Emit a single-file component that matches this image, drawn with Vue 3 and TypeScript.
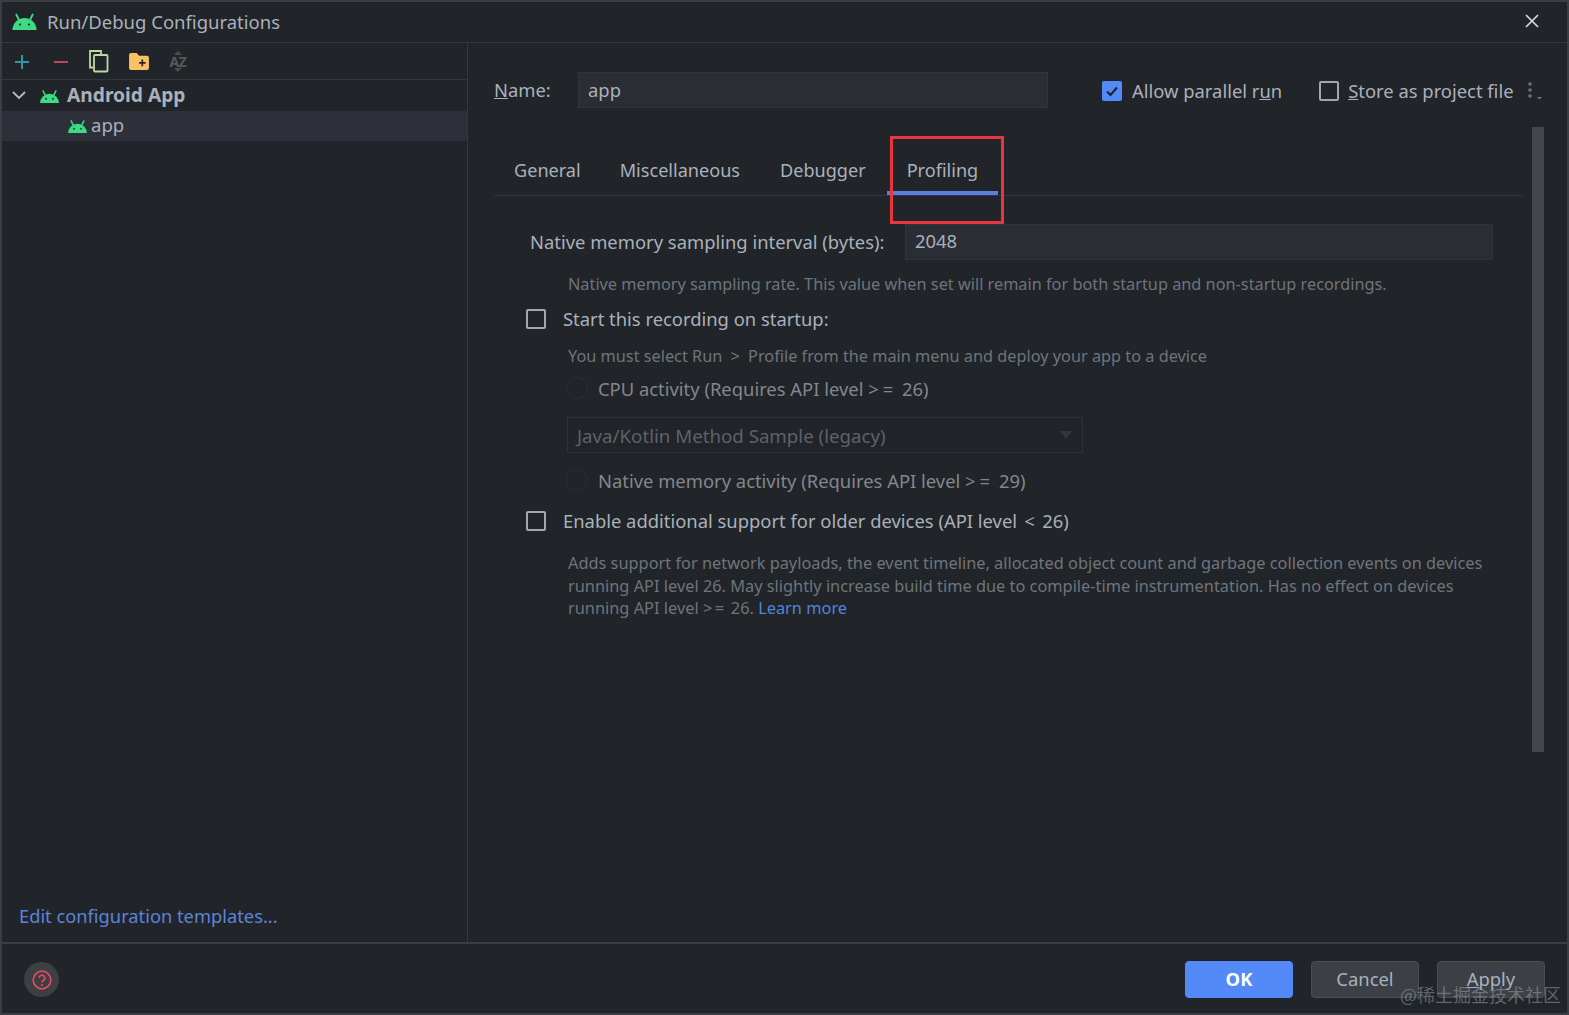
<script setup lang="ts">
const tabs: string[] = ['General', 'Miscellaneous', 'Debugger', 'Profiling']
</script>

<template>
  <div class="win">
    <header class="titlebar">
      <svg class="logo" viewBox="0 0 24 18" width="25" height="18"><path d="M0 18a12 12 0 0 1 24 0z" fill="#3ddc84"/><path d="M6.500 8 3.800 2.500M17.500 8l2.700-5.500" stroke="#3ddc84" stroke-width="1.800" stroke-linecap="round"/><circle cx="7.500" cy="12.500" r="1.100" fill="#1f2226"/><circle cx="16.500" cy="12.500" r="1.100" fill="#1f2226"/></svg>
      <span class="title">Run/Debug Configurations</span>
      <svg class="close" viewBox="0 0 14 14" width="14" height="14"><path d="M1 1l12 12M13 1 1 13" stroke="#d5d8dc" stroke-width="1.700"/></svg>
    </header>

    <div class="body">
      <aside class="side">
        <div class="toolbar">
          <svg viewBox="0 0 16 16" width="16" height="16"><path d="M8 1v14M1 8h14" stroke="#2f97a5" stroke-width="2"/></svg>
          <svg viewBox="0 0 16 16" width="16" height="16"><path d="M1 8h14" stroke="#b8485e" stroke-width="2"/></svg>
          <svg class="tight" viewBox="0 0 20 23" width="20" height="23"><path d="M4.500 17.500H1V1h11v3" fill="none" stroke="#bcd79f" stroke-width="1.800"/><rect x="5" y="5" width="13.500" height="16.500" fill="none" stroke="#bcd79f" stroke-width="1.800" rx="1"/></svg>
          <svg class="tight" viewBox="0 0 21 18" width="20" height="17"><path d="M0 2a2 2 0 0 1 2-2h6l2.500 3H19a2 2 0 0 1 2 2v11a2 2 0 0 1-2 2H2a2 2 0 0 1-2-2z" fill="#f9c364"/><path d="M10.500 10.500h7M14 7v7" stroke="#23262a" stroke-width="1.800"/></svg>
          <span class="az tight">
            <svg viewBox="0 0 8 4" width="8" height="4"><path d="M0 4h8L4 0z" fill="#4a4d52"/></svg>
            <span>AZ</span>
            <svg viewBox="0 0 8 4" width="8" height="4"><path d="M0 0h8L4 4z" fill="#4a4d52"/></svg>
          </span>
        </div>
        <div class="tree-row group">
          <svg viewBox="0 0 14 9" width="14" height="9"><path d="M1 1l6 6 6-6" fill="none" stroke="#b7bcc4" stroke-width="1.800"/></svg>
          <svg class="droid" viewBox="0 0 24 18" width="19" height="14"><path d="M0 18a12 12 0 0 1 24 0z" fill="#3ddc84"/><path d="M6.500 8 3.800 2.500M17.500 8l2.700-5.500" stroke="#3ddc84" stroke-width="2" stroke-linecap="round"/><circle cx="7.500" cy="12.500" r="1.200" fill="#1f2226"/><circle cx="16.500" cy="12.500" r="1.200" fill="#1f2226"/></svg>
          <strong>Android App</strong>
        </div>
        <div class="tree-row child">
          <svg class="droid" viewBox="0 0 24 18" width="19" height="14"><path d="M0 18a12 12 0 0 1 24 0z" fill="#3ddc84"/><path d="M6.500 8 3.800 2.500M17.500 8l2.700-5.500" stroke="#3ddc84" stroke-width="2" stroke-linecap="round"/><circle cx="7.500" cy="12.500" r="1.200" fill="#2d3038"/><circle cx="16.500" cy="12.500" r="1.200" fill="#2d3038"/></svg>
          <span class="child-label">app</span>
        </div>
        <a class="templates">Edit configuration templates...</a>
      </aside>

      <main class="main">
        <div class="name-row">
          <label class="name-label raise"><u>N</u>ame:</label>
          <div class="input name-input">app</div>
          <span class="check-box checked">
            <svg viewBox="0 0 20 20" width="20" height="20"><path d="M5 10.500l3.500 3.500L15 6.500" fill="none" stroke="#1d2027" stroke-width="2"/></svg>
          </span>
          <span class="check-label">Allow parallel r<u>u</u>n</span>
          <span class="check-box store"></span>
          <span class="check-label store-label"><u>S</u>tore as project file</span>
          <svg class="dots" viewBox="0 0 16 20" width="16" height="20"><circle cx="4" cy="3" r="1.800" fill="#6e7278"/><circle cx="4" cy="9" r="1.800" fill="#6e7278"/><circle cx="4" cy="15" r="1.800" fill="#6e7278"/><path d="M11 16h5l-2.500 2.500z" fill="#6e7278"/></svg>
        </div>

        <nav class="tabs">
          <span v-for="t in tabs" :key="t" class="tab" :class="{ active: t === 'Profiling' }">{{ t }}</span>
        </nav>

        <div class="form">
          <div class="interval-row">
            <span class="interval-label raise">Native memory sampling interval (bytes):</span>
            <div class="input interval-input">2048</div>
          </div>
          <p class="hint first">Native memory sampling rate. This value when set will remain for both startup and non-startup recordings.</p>
          <div class="opt startup"><span class="check-box"></span><span class="raise">Start this recording on startup:</span></div>
          <p class="hint second">You must select Run <span class="gt">&gt;</span> Profile from the main menu and deploy your app to a device</p>
          <div class="radio-row cpu"><span class="radio"></span><span>CPU activity (Requires API level <span class="op">&gt;=</span> 26)</span></div>
          <div class="select">
            <span>Java/Kotlin Method Sample (legacy)</span>
            <svg viewBox="0 0 12 8" width="12" height="8"><path d="M0 0h12L6 8z" fill="#33363b"/></svg>
          </div>
          <div class="radio-row native"><span class="radio"></span><span>Native memory activity (Requires API level <span class="op">&gt;=</span> 29)</span></div>
          <div class="opt older"><span class="check-box"></span><span class="raise">Enable additional support for older devices (API level <span class="lt">&lt;</span> 26)</span></div>
          <p class="hint para">Adds support for network payloads, the event timeline, allocated object count and garbage collection events on devices<br>running API level 26. May slightly increase build time due to compile-time instrumentation. Has no effect on devices<br>running API level <span class="op-small">&gt;=</span> 26. <a>Learn more</a></p>
        </div>

        <div class="scrollbar"></div>
      </main>
    </div>

    <footer class="footer">
      <span class="help">
        <svg viewBox="0 0 20 20" width="20" height="20"><circle cx="10" cy="10" r="8.800" fill="none" stroke="#e8485f" stroke-width="1.700"/><path d="M7.200 8a2.800 2.800 0 1 1 4.400 2.300c-1 .7-1.600 1.200-1.600 2.200" fill="none" stroke="#e8485f" stroke-width="1.700"/><circle cx="10" cy="15" r="1.100" fill="#e8485f"/></svg>
      </span>
      <button class="btn ok">OK</button>
      <button class="btn">Cancel</button>
      <button class="btn apply"><u>A</u>pply</button>
    </footer>

    <div class="callout"></div>
    <div class="watermark">@稀土掘金技术社区</div>
  </div>
</template>

<style>
body { margin: 0; background: #212429; }
</style>

<style scoped>
.win {
  position: relative;
  box-sizing: border-box;
  width: 1569px;
  height: 1015px;
  display: flex;
  flex-direction: column;
  background: #212429;
  border: 2px solid #3a3d42;
  color: #a9b1bb;
  font-family: "Noto Sans", "Open Sans", sans-serif;
  font-size: 18.400px;
  overflow: hidden;
}
.raise { margin-bottom: 2px; }
.titlebar {
  box-sizing: border-box;
  flex: 0 0 41px;
  display: flex;
  align-items: center;
  padding: 0 0 2px 10px;
  border-bottom: 1px solid #33363b;
}
.title { margin-left: 10px; font-size: 18.500px; }
.close { margin-left: auto; margin-right: 28px; }
.body { flex: 1; display: flex; min-height: 0; }
.side {
  flex: 0 0 465px;
  display: flex;
  flex-direction: column;
  border-right: 1px solid #33363b;
}
.toolbar {
  flex: none;
  display: flex;
  align-items: center;
  padding: 1px 0 0 12px;
  height: 35px;
  gap: 23px;
  border-bottom: 1px solid #33363b;
}
.tight { margin-left: -3px; }
.az {
  display: flex;
  flex-direction: column;
  align-items: center;
  width: 18px;
  font-size: 14px;
  line-height: 13px;
  font-weight: 700;
  color: #55585d;
  letter-spacing: -.5px;
}
.tree-row { flex: none; display: flex; align-items: center; height: 30px; }
.group { height: 31px; padding-left: 10px; gap: 14px; }
.group strong { font-weight: 700; font-size: 19.200px; margin: 0 0 2px -6px; }
.child { padding-left: 66px; gap: 4px; background: #2d3038; font-size: 18.600px; }
.child-label { margin-bottom: 4px; }
.templates { margin-top: auto; margin-bottom: 14px; margin-left: 17px; color: #5a85d8; font-size: 18.300px; }
.main { position: relative; flex: 1; padding: 29px 0 0 26px; min-width: 0; }
.name-row { display: flex; align-items: center; height: 36px; }
.name-label { width: 84px; }
.input {
  box-sizing: border-box;
  height: 36px;
  display: flex;
  align-items: center;
  padding: 0 0 2px 9px;
  background: #2a2d33;
  border: 1px solid #31343a;
}
.name-input { width: 470px; margin-right: 54px; }
.check-box {
  box-sizing: border-box;
  flex: none;
  width: 20px;
  height: 20px;
  border: 2px solid #a3a6aa;
  border-radius: 2px;
}
.name-row .check-box { margin-top: 2px; }
.check-box.checked { background: #548af7; border: 0; }
.check-box.store { margin-left: 37px; }
.check-label { margin-left: 10px; }
.store-label { margin-left: 9px; }
.dots { margin-left: 12px; margin-top: 2px; }
.tabs {
  display: flex;
  margin-top: 29px;
  margin-right: 44px;
  height: 59px;
  box-sizing: border-box;
  border-bottom: 1px solid #33363b;
}
.tab {
  display: flex;
  align-items: center;
  box-sizing: border-box;
  height: 58px;
  padding: 11px 20px 0;
  border-bottom: 4px solid transparent;
  font-size: 18.100px;
}
.tab:first-child { padding-right: 19px; }
.tab:nth-child(3) { padding-right: 21px; }
.tab.active { border-bottom-color: #5b7fdc; }
.form { padding-left: 32px; }
.interval-row { display: flex; align-items: center; margin-top: 28px; }
.interval-label { margin-left: 4px; width: 375px; }
.interval-input { width: 588px; padding-bottom: 4px; }
.hint { margin: 0; font-size: 16.300px; color: #6f747b; }
.op { letter-spacing: 4px; }
.op-small { letter-spacing: 2.500px; }
.gt { margin: 0 4px; }
.lt { margin: 0 2.500px; }
.first { margin: 11px 0 0 42px; line-height: 26px; }
.opt { display: flex; align-items: center; gap: 17px; }
.startup { margin-top: 7px; height: 30px; }
.second { margin: 9px 0 0 42px; line-height: 26px; }
.radio-row {
  box-sizing: border-box;
  display: flex;
  align-items: center;
  gap: 10px;
  margin-left: 40px;
  height: 30px;
  padding-bottom: 2px;
  color: #83878d;
}
.radio {
  box-sizing: border-box;
  width: 22px;
  height: 22px;
  border: 1px solid #2a2d32;
  border-radius: 50%;
}
.cpu { margin-top: 5px; }
.select {
  box-sizing: border-box;
  display: flex;
  align-items: center;
  justify-content: space-between;
  width: 516px;
  height: 36px;
  margin: 13px 0 0 41px;
  padding: 0 10px 0 9px;
  border: 1px solid #2e3136;
  color: #5e6268;
  font-size: 18.700px;
}
.native { margin-top: 13px; }
.older { margin-top: 10px; height: 30px; }
.para { margin: 16px 0 0 42px; line-height: 22.500px; font-size: 16.350px; }
.para a { color: #4f86d6; }
.scrollbar {
  position: absolute;
  top: 84px;
  right: 23px;
  width: 12px;
  height: 625px;
  background: #43464b;
}
.footer {
  flex: 0 0 67px;
  display: flex;
  align-items: center;
  gap: 18px;
  padding: 2px 22px 0;
  border-top: 2px solid #3a3d42;
}
.help {
  width: 35px;
  height: 35px;
  margin-right: auto;
  border-radius: 50%;
  background: #3c3f44;
  display: flex;
  align-items: center;
  justify-content: center;
}
.btn {
  box-sizing: border-box;
  width: 108px;
  height: 37px;
  border: 1px solid #4a4d52;
  border-radius: 4px;
  background: #3c3f45;
  color: #a9b1bb;
  font: inherit;
  padding: 0 0 2px;
}
.btn.ok { background: #548af7; border-color: #548af7; color: #fff; font-weight: 700; }
.callout {
  position: absolute;
  left: 888px;
  top: 134px;
  width: 114px;
  height: 88px;
  box-sizing: border-box;
  border: 3px solid #e8363e;
}
.watermark {
  position: absolute;
  right: 6px;
  bottom: 6px;
  font-family: "Noto Sans CJK SC", sans-serif;
  font-size: 18px;
  color: rgba(160,165,172,.5);
}
</style>
